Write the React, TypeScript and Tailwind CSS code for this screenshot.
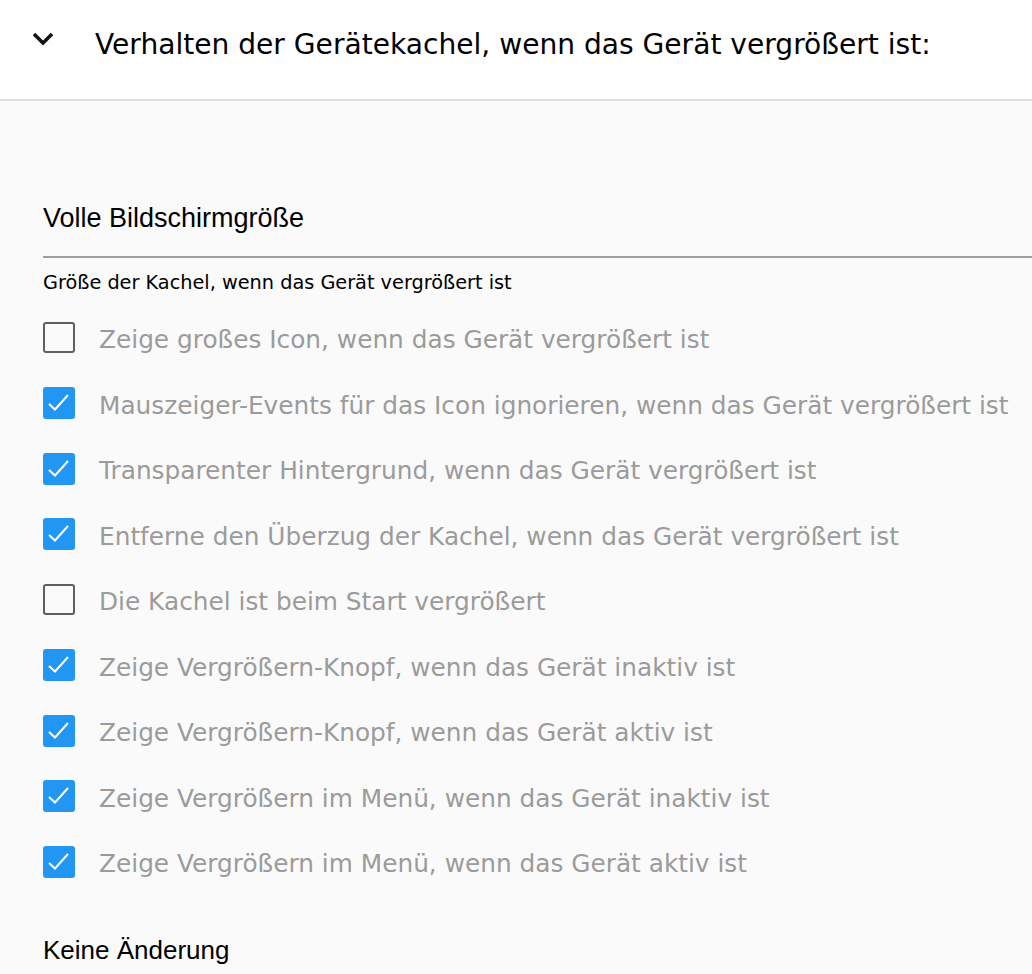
import React from "react";

const items: [string, boolean][] = [
  ["Zeige großes Icon, wenn das Gerät vergrößert ist", false],
  ["Mauszeiger-Events für das Icon ignorieren, wenn das Gerät vergrößert ist", true],
  ["Transparenter Hintergrund, wenn das Gerät vergrößert ist", true],
  ["Entferne den Überzug der Kachel, wenn das Gerät vergrößert ist", true],
  ["Die Kachel ist beim Start vergrößert", false],
  ["Zeige Vergrößern-Knopf, wenn das Gerät inaktiv ist", true],
  ["Zeige Vergrößern-Knopf, wenn das Gerät aktiv ist", true],
  ["Zeige Vergrößern im Menü, wenn das Gerät inaktiv ist", true],
  ["Zeige Vergrößern im Menü, wenn das Gerät aktiv ist", true],
];

function Box({ checked }: { checked: boolean }) {
  if (checked) {
    return (
      <div className="w-[32px] h-[32px] rounded-[3px] bg-[#2196f3] flex items-center justify-center shrink-0">
        <svg width="32" height="32" viewBox="0 0 32 32">
          <path d="M6 17 L12 22.5 L25 8" fill="none" stroke="white" strokeWidth="2" />
        </svg>
      </div>
    );
  }
  return <div className="w-[32px] h-[31px] rounded-[3px] border-2 border-[#5f5f5f] shrink-0" />;
}

export default function App() {
  const lucida = { fontFamily: '"DejaVu Sans", sans-serif' };
  const helv = { fontFamily: '"Liberation Sans", sans-serif' };
  return (
    <div className="w-[1032px] h-[974px] overflow-hidden bg-[#fafafa]">
      <div className="h-[101px] bg-white border-b-2 border-[#dedede] flex items-center">
        <div className="w-[95px] pl-[32px] flex items-center -mt-[22px]">
          <svg width="22" height="14" viewBox="0 0 22 14">
            <path d="M2 2 L11 11 L20 2" fill="none" stroke="#111" strokeWidth="3.5" />
          </svg>
        </div>
        <div className="text-[28.1px] text-black -mt-[8px]" style={lucida}>
          Verhalten der Gerätekachel, wenn das Gerät vergrößert ist:
        </div>
      </div>
      <div className="pl-[43px]">
        <div className="pt-[97px] h-[157px] border-b-2 border-[#9e9e9e] text-[27px] text-black" style={helv}>
          Volle Bildschirmgröße
        </div>
        <div className="mt-[11px] text-[19.3px] text-black" style={lucida}>
          Größe der Kachel, wenn das Gerät vergrößert ist
        </div>
        <div className="mt-[24px] flex flex-col gap-[33.5px]">
          {items.map(([label, checked]) => (
            <div key={label} className="flex items-center h-[32px]">
              <Box checked={checked} />
              <span className="ml-[24px] mt-[4px] text-[24.8px] text-[#9b9b9b] whitespace-nowrap" style={lucida}>
                {label}
              </span>
            </div>
          ))}
        </div>
        <div className="mt-[53px] text-[26px] text-black" style={helv}>
          Keine Änderung
        </div>
      </div>
    </div>
  );
}
